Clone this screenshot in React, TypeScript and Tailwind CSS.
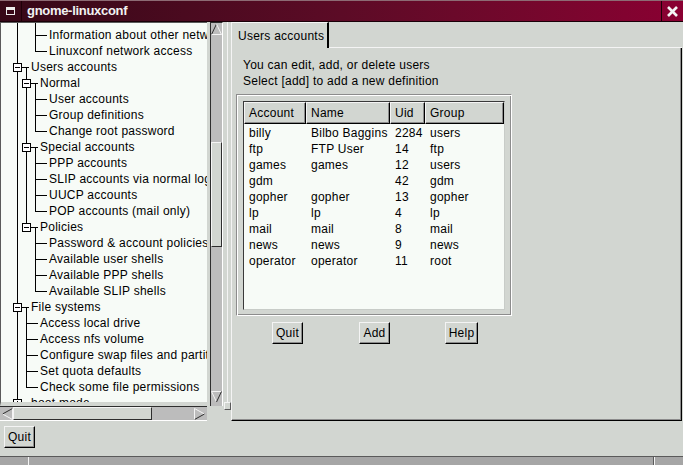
import React from "react";

type TreeRow = {
  label: string;
  level: 0 | 1 | 2;
  guides?: number[];
  expander?: boolean;
  open?: boolean;
  last?: boolean;
};

const TREE: TreeRow[] = [
  { label: "Information about other networks", level: 2, guides: [0] },
  { label: "Linuxconf network access", level: 2, guides: [0], last: true },
  { label: "Users accounts", level: 0, expander: true, open: true },
  { label: "Normal", level: 1, guides: [0], expander: true, open: true },
  { label: "User accounts", level: 2, guides: [0, 1] },
  { label: "Group definitions", level: 2, guides: [0, 1] },
  { label: "Change root password", level: 2, guides: [0, 1], last: true },
  { label: "Special accounts", level: 1, guides: [0], expander: true, open: true },
  { label: "PPP accounts", level: 2, guides: [0, 1] },
  { label: "SLIP accounts via normal login", level: 2, guides: [0, 1] },
  { label: "UUCP accounts", level: 2, guides: [0, 1] },
  { label: "POP accounts (mail only)", level: 2, guides: [0, 1], last: true },
  { label: "Policies", level: 1, guides: [0], expander: true, open: true, last: true },
  { label: "Password & account policies", level: 2, guides: [0] },
  { label: "Available user shells", level: 2, guides: [0] },
  { label: "Available PPP shells", level: 2, guides: [0] },
  { label: "Available SLIP shells", level: 2, guides: [0], last: true },
  { label: "File systems", level: 0, expander: true, open: true },
  { label: "Access local drive", level: 1, guides: [0] },
  { label: "Access nfs volume", level: 1, guides: [0] },
  { label: "Configure swap files and partitions", level: 1, guides: [0] },
  { label: "Set quota defaults", level: 1, guides: [0] },
  { label: "Check some file permissions", level: 1, guides: [0], last: true },
  { label: "boot mode", level: 0, expander: true, open: false },
];

const PAD = ["pl-[30px]", "pl-[39px]", "pl-[48px]"];

const USERS = [
  ["billy", "Bilbo Baggins", "2284", "users"],
  ["ftp", "FTP User", "14", "ftp"],
  ["games", "games", "12", "users"],
  ["gdm", "", "42", "gdm"],
  ["gopher", "gopher", "13", "gopher"],
  ["lp", "lp", "4", "lp"],
  ["mail", "mail", "8", "mail"],
  ["news", "news", "9", "news"],
  ["operator", "operator", "11", "root"],
];

const COLS = ["w-[62px]", "w-[84px]", "w-[35px]", "flex-1"];

const lineX = (level: number) => 16.5 + level * 9;

function TreeLines({ row }: { row: TreeRow }) {
  const x = lineX(row.level);
  return (
    <svg className="absolute left-0 top-0" width="60" height="16">
      {(row.guides ?? []).map((g) => (
        <line key={g} x1={lineX(g)} y1="0" x2={lineX(g)} y2="16" stroke="#000" />
      ))}
      <line x1={x} y1="0" x2={x} y2={row.last ? 9 : 16} stroke="#000" />
      {row.expander ? (
        <>
          <line x1={x + 4} y1="8.5" x2={x + 11.5} y2="8.5" stroke="#000" />
          {row.open && <line x1={x + 9} y1="8.5" x2={x + 9} y2="16" stroke="#000" />}
          <rect x={x - 4} y="4.5" width="8" height="8" fill="#fff" stroke="#000" />
          <line x1={x - 2.5} y1="8.5" x2={x + 2.5} y2="8.5" stroke="#000" />
          {!row.open && <line x1={x} y1="6" x2={x} y2="11" stroke="#000" />}
        </>
      ) : (
        <line x1={x - 0.5} y1="8.5" x2={x + 11.5} y2="8.5" stroke="#000" />
      )}
    </svg>
  );
}

function Arrow({ dir }: { dir: "up" | "down" | "left" | "right" }) {
  const dark = "#2e2e2e";
  const light = "#f4f4f4";
  return (
    <svg width="11" height="12" viewBox="0 0 11 12">
      {dir === "up" && (
        <>
          <line x1="0.5" y1="11.5" x2="5.5" y2="1" stroke={dark} />
          <line x1="5.5" y1="1" x2="10.5" y2="11.5" stroke={light} />
          <line x1="0.5" y1="11.5" x2="10.5" y2="11.5" stroke={light} />
        </>
      )}
      {dir === "down" && (
        <>
          <line x1="0.5" y1="0.5" x2="10.5" y2="0.5" stroke={light} />
          <line x1="0.5" y1="0.5" x2="5.5" y2="11" stroke={light} />
          <line x1="5.5" y1="11" x2="10.5" y2="0.5" stroke={dark} />
        </>
      )}
      {dir === "left" && (
        <>
          <line x1="10.5" y1="0.5" x2="0.5" y2="6" stroke={dark} />
          <line x1="0.5" y1="6" x2="10.5" y2="11.5" stroke={light} />
          <line x1="10.5" y1="0.5" x2="10.5" y2="11.5" stroke={light} />
        </>
      )}
      {dir === "right" && (
        <>
          <line x1="0.5" y1="0.5" x2="10.5" y2="6" stroke={light} />
          <line x1="10.5" y1="6" x2="0.5" y2="11.5" stroke={dark} />
          <line x1="0.5" y1="0.5" x2="0.5" y2="11.5" stroke={light} />
        </>
      )}
    </svg>
  );
}

function Button({ label }: { label: string }) {
  return (
    <button className="h-[22px] border border-t-[#f4f4f4] border-l-[#f4f4f4] border-r-black border-b-black bg-[#d2d6d1] px-[3px] leading-none shadow-[inset_-1px_-1px_0_#8c8c8c]">
      {label}
    </button>
  );
}

function TitleBar() {
  return (
    <div className="flex h-[22px] shrink-0 items-stretch border-t border-t-[#8d6b74] border-b border-b-[#1a0008] bg-linear-to-r from-[#360817] via-[#5c0b26] to-[#8a0032]">
      <div className="flex w-[22px] items-center justify-center border-r border-[#1f0008]">
        <div className="h-[8px] w-[9px] border border-t-[3px] border-[#ececec]" />
      </div>
      <div className="ml-[5px] flex items-center text-[13px] font-bold tracking-[-0.3px] text-[#f2f2f2]">
        gnome-linuxconf
      </div>
      <div className="ml-auto flex w-[22px] items-center justify-center border-l border-[#1f0008]">
        <svg width="11" height="11" viewBox="0 0 11 11">
          <line x1="1" y1="1" x2="10" y2="10" stroke="#f4f4f4" strokeWidth="2.6" />
          <line x1="10" y1="1" x2="1" y2="10" stroke="#f4f4f4" strokeWidth="2.6" />
        </svg>
      </div>
    </div>
  );
}

function TreePane() {
  return (
    <div className="flex w-[223px] flex-col">
      <div className="flex h-[384px]">
        <div className="w-[207px] overflow-hidden border-l border-t border-b-[4px] border-l-[#5a5a5a] border-t-[#5a5a5a] border-b-[#d2d6d1] bg-[#f7fbf7]">
          <svg className="block" width="60" height="4">
            <line x1={lineX(0)} y1="0" x2={lineX(0)} y2="4" stroke="#000" />
            <line x1={lineX(2)} y1="0" x2={lineX(2)} y2="4" stroke="#000" />
          </svg>
          {TREE.map((row) => (
            <div key={row.label} className={`relative h-4 whitespace-nowrap leading-4 ${PAD[row.level]}`}>
              <TreeLines row={row} />
              {row.label}
            </div>
          ))}
        </div>
        <div className="ml-[3px] flex w-[13px] flex-col border-l border-t border-l-[#2e2e2e] border-t-[#2e2e2e] border-r border-r-white bg-[#bcbcbc]">
          <div className="flex h-[12px] justify-center">
            <Arrow dir="up" />
          </div>
          <div className="flex-1">
            <div className="mt-[107px] h-[105px] border border-t-[#f4f4f4] border-l-[#f4f4f4] border-r-[#2e2e2e] border-b-[#2e2e2e] bg-[#d2d6d1]" />
          </div>
          <div className="mb-[3px] flex h-[12px] justify-center">
            <Arrow dir="down" />
          </div>
        </div>
      </div>
      <div className="flex h-[15px] w-[207px] items-center border-t border-b border-t-[#2e2e2e] border-b-white bg-[#bcbcbc] pl-[2px]">
        <Arrow dir="left" />
        <div className="h-[13px] w-[139px] border border-t-[#f4f4f4] border-l-[#f4f4f4] border-r-[#2e2e2e] border-b-[#2e2e2e] bg-[#d2d6d1]" />
        <div className="flex-1" />
        <Arrow dir="right" />
        <div className="w-[2px]" />
      </div>
    </div>
  );
}

function UsersPage() {
  return (
    <div className="mr-px flex flex-1 flex-col">
      <div className="flex h-[26px]">
        <div className="flex w-[98px] items-center border-l border-t border-l-[#f4f4f4] border-t-[#f4f4f4] border-r-2 border-r-black pl-[6px]">
          Users accounts
        </div>
        <div className="flex-1 border-b border-[#f4f4f4]" />
      </div>
      <div className="flex flex-1 flex-col border-l border-l-[#f4f4f4] border-r border-r-black border-b border-b-black shadow-[inset_-1px_-1px_0_#8c8c8c]">
        <div className="pl-[11px] pt-[9px] leading-4">
          <div>You can edit, add, or delete users</div>
          <div>Select [add] to add a new definition</div>
        </div>
        <div className="ml-[4px] mt-[5px] h-[222px] w-[276px] border border-[#8c8c8c] border-r-white border-b-white pl-[6px] pt-[6px] shadow-[inset_1px_1px_0_#fff,inset_-1px_-1px_0_#8c8c8c]">
          <div className="flex h-[209px] w-[262px] flex-col border border-t-[#3a3a3a] border-l-[#3a3a3a] border-r-[#c8ccc8] border-b-[#c8ccc8] bg-[#f7fbf7]">
            <div className="flex h-[22px] bg-[#d2d6d1]">
              {["Account", "Name", "Uid", "Group"].map((h, i) => (
                <div
                  key={h}
                  className={`${COLS[i]} flex items-center border border-t-[#f4f4f4] border-l-[#f4f4f4] border-r-black border-b-black pl-[4px] shadow-[inset_-1px_-1px_0_#8c8c8c]`}
                >
                  {h}
                </div>
              ))}
            </div>
            <div className="mt-[1px]">
              {USERS.map((u) => (
                <div key={u[0]} className="flex h-4 leading-4">
                  {u.map((c, i) => (
                    <div key={i} className={`${COLS[i]} whitespace-nowrap pl-[5px]`}>
                      {c}
                    </div>
                  ))}
                </div>
              ))}
            </div>
          </div>
        </div>
        <div className="ml-[12px] mt-[6px] grid w-[261px] grid-cols-3 justify-items-center">
          <Button label="Quit" />
          <Button label="Add" />
          <Button label="Help" />
        </div>
      </div>
    </div>
  );
}

export default function App() {
  return (
    <div className="flex h-[465px] w-[683px] flex-col overflow-hidden bg-[#d2d6d1] font-['Liberation_Sans',Arial,sans-serif] text-[12px] tracking-[0.25px] text-black">
      <TitleBar />
      <div className="flex h-[399px] shrink-0">
        <TreePane />
        <div className="flex w-[8px] flex-col items-center">
          <div className="ml-[1px] w-px flex-1 bg-[#f4f4f4]" />
          <div className="h-[8px] w-[7px] border border-t-[#f4f4f4] border-l-[#f4f4f4] border-r-[#5a5a5a] border-b-[#5a5a5a]" />
          <div className="h-[11px]" />
        </div>
        <UsersPage />
      </div>
      <div className="ml-[4px] mt-[5px]">
        <Button label="Quit" />
      </div>
      <div className="mt-auto flex h-[9px] border-t border-[#5a5a5a] bg-[#a6a6a6]">
        <div className="w-[29px] border-r border-[#f4f4f4]" />
        <div className="flex-1 border-r border-[#5a5a5a]" />
        <div className="w-[29px] border-l border-[#f4f4f4]" />
      </div>
    </div>
  );
}
